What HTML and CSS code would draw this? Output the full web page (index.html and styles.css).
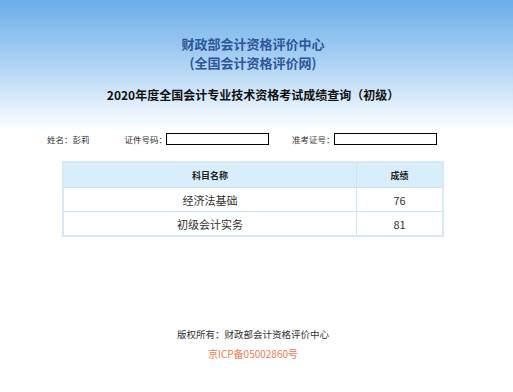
FILE: index.html
```html
<!DOCTYPE html>
<html lang="zh-CN">
<head>
<meta charset="utf-8">
<title>成绩查询</title>
<link rel="stylesheet" href="styles.css">
</head>
<body>
<div class="page">
  <header class="head">
    <h1 class="org">财政部会计资格评价中心</h1>
    <h1 class="org">(全国会计资格评价网)</h1>
    <h2 class="title">2020年度全国会计专业技术资格考试成绩查询（初级）</h2>
  </header>
  <div class="info">
    <span class="field name">姓名：彭莉</span>
    <span class="field id">证件号码：<span class="box"></span></span>
    <span class="field ticket">准考证号：<span class="box"></span></span>
  </div>
  <table class="scores">
    <thead>
      <tr><th class="c1">科目名称</th><th class="c2">成绩</th></tr>
    </thead>
    <tbody>
      <tr><td>经济法基础</td><td>76</td></tr>
      <tr><td>初级会计实务</td><td>81</td></tr>
    </tbody>
  </table>
  <footer class="foot">
    <p class="copy">版权所有：财政部会计资格评价中心</p>
    <p class="icp">京ICP备05002860号</p>
  </footer>
</div>
</body>
</html>
```

FILE: styles.css
```css
html, body {
  margin: 0;
  padding: 0;
}
body {
  width: 513px;
  height: 392px;
  overflow: hidden;
  font-family: "Noto Sans CJK SC", "Noto Sans", sans-serif;
  color: #333;
  background: linear-gradient(to bottom, #6aade9 0px, #a9d0f3 60px, #e6f1fc 110px, #fdfeff 130px, #ffffff 140px);
}
.page {
  width: 506px;
  display: flex;
  flex-direction: column;
  align-items: center;
}
.head {
  padding-top: 34px;
  display: flex;
  flex-direction: column;
  align-items: center;
}
.org {
  margin: 0;
  font-size: 13px;
  line-height: 19px;
  font-weight: bold;
  color: #2c5699;
}
.title {
  margin: 14px 0 0;
  font-size: 12px;
  line-height: 18px;
  font-weight: bold;
  color: #111;
}
.info {
  align-self: stretch;
  margin-top: 28px;
  height: 14px;
  display: flex;
  align-items: center;
  font-size: 8.5px;
  color: #333;
  padding-left: 47px;
}
.field {
  display: flex;
  align-items: center;
  white-space: nowrap;
}
.id { margin-left: 35px; }
.ticket { margin-left: 23px; }
.box {
  display: inline-block;
  width: 101px;
  height: 10px;
  border: 1px solid #000;
  background: #fff;
  margin-left: -1px;
}
.scores {
  margin-top: 15px;
  width: 382px;
  border-collapse: collapse;
  border: 2px solid #d4eaf8;
}
.scores th, .scores td {
  border: 1px solid #c9e4f6;
  text-align: center;
  padding: 0;
}
.scores th {
  height: 24px;
  background: #d8eefa;
  font-size: 9px;
  font-weight: bold;
  color: #222;
}
.scores td {
  height: 23px;
  font-size: 11px;
  color: #333;
  background: #fff;
}
.c1 { width: 292px; }
.foot {
  margin-top: 90px;
  display: flex;
  flex-direction: column;
  align-items: center;
}
.foot p {
  margin: 0;
}
.copy {
  font-size: 9.5px;
  line-height: 14px;
  color: #333;
}
.icp {
  margin-top: 6px !important;
  font-size: 10px;
  line-height: 14px;
  color: #f27a55;
}
```
